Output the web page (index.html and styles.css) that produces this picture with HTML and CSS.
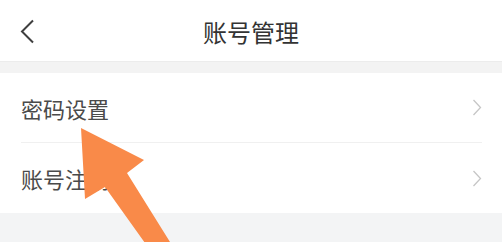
FILE: index.html
```html
<!DOCTYPE html>
<html lang="zh-CN">
<head>
<meta charset="utf-8">
<title>账号管理</title>
<link rel="stylesheet" href="styles.css">
</head>
<body>
<div class="page">
  <header class="nav">
    <svg class="back" width="16" height="26" viewBox="0 0 16 26"><path d="M13 1.5 L2 12.5 L13 23.5" fill="none" stroke="#3f3f3f" stroke-width="2"/></svg>
    <h1 class="title">账号管理</h1>
  </header>
  <div class="band"></div>
  <ul class="list">
    <li class="row"><span class="label">密码设置</span><svg class="chev" width="10" height="17" viewBox="0 0 10 17"><path d="M1.5 1 L8.5 8.5 L1.5 16" fill="none" stroke="#c6c6c6" stroke-width="1.3"/></svg></li>
    <li class="row"><span class="label">账号注销</span><svg class="chev" width="10" height="17" viewBox="0 0 10 17"><path d="M1.5 1 L8.5 8.5 L1.5 16" fill="none" stroke="#c6c6c6" stroke-width="1.3"/></svg></li>
  </ul>
  <div class="footer"></div>
  <svg class="arrow" width="502" height="242" viewBox="0 0 502 242"><polygon points="81,128 144,160 127,173 175,250 150,250 105,187 85,199" fill="#f98a49"/></svg>
</div>
</body>
</html>
```

FILE: styles.css
```css
html, body {
  margin: 0;
  padding: 0;
  background: #ffffff;
}
.page {
  position: relative;
  width: 502px;
  height: 242px;
  overflow: hidden;
  font-family: "Noto Sans CJK SC", "Noto Sans", sans-serif;
  display: flex;
  flex-direction: column;
}
.nav {
  height: 61px;
  flex: none;
  display: flex;
  align-items: center;
  justify-content: center;
  position: relative;
}
.back {
  position: absolute;
  left: 20px;
  top: 19px;
}
.title {
  margin: 0;
  font-size: 24px;
  font-weight: 400;
  color: #333333;
  line-height: 1;
  margin-top: 2px;
}
.band {
  height: 12px;
  flex: none;
  background: #f3f3f3;
  border-top: 1px solid #ececec;
  box-sizing: border-box;
}
.list {
  list-style: none;
  margin: 0;
  padding: 0 20px 0 21px;
  flex: none;
}
.row {
  height: 69px;
  display: flex;
  align-items: center;
  justify-content: space-between;
}
.row + .row {
  border-top: 1px solid #f0f0f0;
  height: 70px;
}
.label {
  font-size: 22px;
  color: #4a4a4a;
  line-height: 1;
}
.chev {
  margin-right: 0;
}
.footer {
  flex: 1;
  background: #f3f4f5;
}
.arrow {
  position: absolute;
  left: 0;
  top: 0;
}
```
